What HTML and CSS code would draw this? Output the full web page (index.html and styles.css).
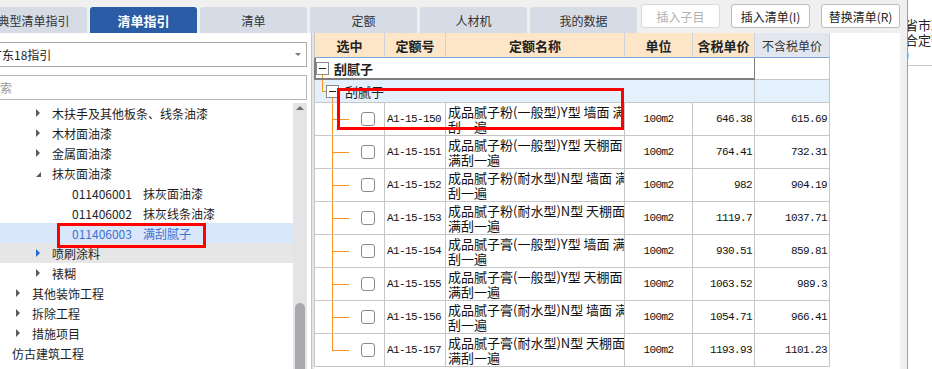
FILE: index.html
```html
<!DOCTYPE html>
<html lang="zh-CN">
<head>
  <meta charset="UTF-8">
  <title>清单指引</title>
  <link rel="stylesheet" href="styles.css">
</head>
<body>
  <div class="app">
    <div class="workspace">
      <div class="topbar">
        <div class="tabs">
          <div class="tab">典型清单指引</div>
          <div class="tab active">清单指引</div>
          <div class="tab">清单</div>
          <div class="tab">定额</div>
          <div class="tab">人材机</div>
          <div class="tab">我的数据</div>
        </div>
        <div class="actions">
          <button class="btn" disabled>插入子目</button>
          <button class="btn">插入清单(I)</button>
          <button class="btn">替换清单(R)</button>
        </div>
      </div>

      <div class="content">
        <div class="guide-panel">
          <div class="select">广东18指引<span class="caret"></span></div>
          <div class="search">搜索</div>
          <div class="tree-wrap">
            <ul class="tree">
              <li class="node l3"><span class="twisty"></span>木扶手及其他板条、线条油漆</li>
              <li class="node l3"><span class="twisty"></span>木材面油漆</li>
              <li class="node l3"><span class="twisty"></span>金属面油漆</li>
              <li class="node l3"><span class="twisty open"></span>抹灰面油漆</li>
              <li class="node l4"><span class="code">011406001</span>抹灰面油漆</li>
              <li class="node l4"><span class="code">011406002</span>抹灰线条油漆</li>
              <li class="node l4 selected"><span class="code">011406003</span>满刮腻子</li>
              <li class="node l3 hover"><span class="twisty"></span>喷刷涂料</li>
              <li class="node l3"><span class="twisty"></span>裱糊</li>
              <li class="node l2"><span class="twisty"></span>其他装饰工程</li>
              <li class="node l2"><span class="twisty"></span>拆除工程</li>
              <li class="node l2"><span class="twisty"></span>措施项目</li>
              <li class="node l1">仿古建筑工程</li>
            </ul>
            <div class="scroll">
              <span class="scroll-up"></span>
              <span class="thumb"></span>
            </div>
          </div>
          <div class="mark mark-tree"></div>
        </div>

        <div class="splitter"></div>

        <div class="quota-panel">
          <div class="quota">
            <div class="q-row head">
              <div class="cell">选中</div>
              <div class="cell">定额号</div>
              <div class="cell">定额名称</div>
              <div class="cell">单位</div>
              <div class="cell">含税单价</div>
              <div class="cell net">不含税单价</div>
            </div>
            <div class="q-row g1">
              <div class="cell span"><span class="fold"></span><b>刮腻子</b></div>
              <div class="cell"></div>
            </div>
            <div class="q-row g2">
              <div class="cell span"><span class="fold"></span>刮腻子</div>
              <div class="cell"></div>
            </div>
            <div class="q-row item">
              <div class="cell pick"><span class="check"></span></div>
              <div class="cell code">A1-15-150</div>
              <div class="cell name">成品腻子粉(一般型)Y型 墙面 满<br>刮一遍</div>
              <div class="cell unit">100m2</div>
              <div class="cell num">646.38</div>
              <div class="cell num">615.69</div>
            </div>
            <div class="q-row item">
              <div class="cell pick"><span class="check"></span></div>
              <div class="cell code">A1-15-151</div>
              <div class="cell name">成品腻子粉(一般型)Y型 天棚面<br>满刮一遍</div>
              <div class="cell unit">100m2</div>
              <div class="cell num">764.41</div>
              <div class="cell num">732.31</div>
            </div>
            <div class="q-row item">
              <div class="cell pick"><span class="check"></span></div>
              <div class="cell code">A1-15-152</div>
              <div class="cell name">成品腻子粉(耐水型)N型 墙面 满<br>刮一遍</div>
              <div class="cell unit">100m2</div>
              <div class="cell num">982</div>
              <div class="cell num">904.19</div>
            </div>
            <div class="q-row item">
              <div class="cell pick"><span class="check"></span></div>
              <div class="cell code">A1-15-153</div>
              <div class="cell name">成品腻子粉(耐水型)N型 天棚面<br>满刮一遍</div>
              <div class="cell unit">100m2</div>
              <div class="cell num">1119.7</div>
              <div class="cell num">1037.71</div>
            </div>
            <div class="q-row item">
              <div class="cell pick"><span class="check"></span></div>
              <div class="cell code">A1-15-154</div>
              <div class="cell name">成品腻子膏(一般型)Y型 墙面 满<br>刮一遍</div>
              <div class="cell unit">100m2</div>
              <div class="cell num">930.51</div>
              <div class="cell num">859.81</div>
            </div>
            <div class="q-row item">
              <div class="cell pick"><span class="check"></span></div>
              <div class="cell code">A1-15-155</div>
              <div class="cell name">成品腻子膏(一般型)Y型 天棚面<br>满刮一遍</div>
              <div class="cell unit">100m2</div>
              <div class="cell num">1063.52</div>
              <div class="cell num">989.3</div>
            </div>
            <div class="q-row item">
              <div class="cell pick"><span class="check"></span></div>
              <div class="cell code">A1-15-156</div>
              <div class="cell name">成品腻子膏(耐水型)N型 墙面 满<br>刮一遍</div>
              <div class="cell unit">100m2</div>
              <div class="cell num">1054.71</div>
              <div class="cell num">966.41</div>
            </div>
            <div class="q-row item last">
              <div class="cell pick"><span class="check"></span></div>
              <div class="cell code">A1-15-157</div>
              <div class="cell name">成品腻子膏(耐水型)N型 天棚面<br>满刮一遍</div>
              <div class="cell unit">100m2</div>
              <div class="cell num">1193.93</div>
              <div class="cell num">1101.23</div>
            </div>
          </div>
          <div class="mark mark-table"></div>
        </div>
      </div>
    </div>

    <div class="side">
      <div class="side-cell">省市政<br>合定额<br>)</div>
    </div>
  </div>
</body>
</html>
```

FILE: styles.css
```css
* {
  box-sizing: border-box;
}
body {
  margin: 0;
  font-family: "Noto Sans CJK SC", "Noto Sans", sans-serif;
  font-size: 12px;
  color: #1e1e1e;
  background: #f0f0f0;
  overflow: hidden;
}
.app {
  display: flex;
  height: 369px;
}
.workspace {
  width: 907px;
  display: flex;
  flex-direction: column;
}
.side {
  flex: 1;
  background: #fff;
  border-left: 1px solid #9e9e9e;
  overflow: hidden;
}
.side-cell {
  height: 66px;
  padding-top: 17px;
  margin-left: -3px;
  border-bottom: 1px solid #c8c8c8;
  font-size: 13px;
  line-height: 15px;
  white-space: nowrap;
  color: #222;
}

/* top bar */
.topbar {
  height: 33px;
  display: flex;
  flex: none;
}
.tabs {
  display: flex;
  gap: 3px;
  margin-left: -20px;
  padding-top: 7px;
}
.tab {
  width: 107px;
  height: 26px;
  background: #d6dce6;
  border-radius: 3px 3px 0 0;
  display: flex;
  align-items: center;
  justify-content: center;
  color: #333;
}
.tab.active {
  background: #2b5ca6;
  color: #fff;
  font-size: 13px;
  font-weight: bold;
}
.actions {
  display: flex;
  gap: 11px;
  margin-left: 4px;
  padding-top: 4px;
}
.btn {
  width: 79px;
  height: 24px;
  padding: 0;
  background: #fff;
  border: 1px solid #bcbcbc;
  border-radius: 3px;
  font-family: inherit;
  font-size: 12px;
  color: #222;
}
.btn:disabled {
  border-color: #d9d9d9;
  color: #b0b0b0;
}

/* main area */
.content {
  flex: 1;
  display: flex;
  min-height: 0;
}
.guide-panel {
  position: relative;
  width: 312px;
  background: #fff;
  border-right: 1px solid #c4c4c4;
  display: flex;
  flex-direction: column;
  overflow: hidden;
}
.splitter {
  width: 2px;
  background: #e4e4e4;
}
.quota-panel {
  position: relative;
  width: 586px;
  background: #fff;
}

.select, .search {
  flex: none;
  width: 323px;
  height: 25px;
  margin-left: -16px;
  display: flex;
  align-items: center;
  white-space: nowrap;
}
.select {
  margin-top: 9px;
  border: 1px solid #aaa;
  padding: 0 5px 0 5px;
  color: #1e1e1e;
}
.caret {
  margin-left: auto;
  border-left: 3px solid transparent;
  border-right: 3px solid transparent;
  border-top: 3px solid #777;
}
.search {
  margin-top: 8px;
  border: 1px solid #b5b5b5;
  padding-left: 3px;
  color: #9a9a9a;
}

.tree-wrap {
  flex: 1;
  display: flex;
  margin-top: 3px;
  min-height: 0;
}
.tree {
  width: 293px;
  margin: 0;
  padding: 0;
  list-style: none;
}
.node {
  height: 20px;
  display: flex;
  align-items: center;
  white-space: nowrap;
}
.l1 { padding-left: 12px; }
.l2 { padding-left: 16px; }
.l3 { padding-left: 36px; }
.l4 { padding-left: 72px; }
.twisty {
  width: 16px;
  flex: none;
  display: flex;
  align-items: center;
}
.twisty::before {
  content: "";
  border-left: 4px solid #5b5b5b;
  border-top: 4px solid transparent;
  border-bottom: 4px solid transparent;
}
.twisty.open::before {
  border-top: 0;
  border-left: 5px solid transparent;
  border-bottom: 5px solid #5b5b5b;
  margin-top: 3px;
}
.node .code {
  width: 71px;
  flex: none;
}
.node.selected {
  background: #dae6f9;
  color: #3a72d2;
}
.node.hover {
  background: #e6e6e6;
}
.node.hover .twisty::before {
  border-left-color: #1a6bd6;
}
.scroll {
  width: 14px;
  background: #e4e4e6;
  display: flex;
  flex-direction: column;
  align-items: center;
}
.scroll-up {
  margin-top: 3px;
  border-left: 4px solid transparent;
  border-right: 4px solid transparent;
  border-bottom: 4px solid #6e6e6e;
}
.thumb {
  width: 10px;
  height: 80px;
  margin-top: 193px;
  border-radius: 5px 5px 0 0;
  background: #a8aaae;
}

/* red annotation boxes */
.mark {
  position: absolute;
  border: 3px solid #f00;
}
.mark-tree {
  left: 57px;
  top: 190px;
  width: 149px;
  height: 25px;
}
.mark-table {
  left: 23px;
  top: 55px;
  width: 287px;
  height: 42px;
}

/* quota grid */
.quota {
  display: grid;
  grid-template-columns: 70px 61px 179px 68px 62px 75px;
  grid-template-rows: 25px 22px 23px repeat(8, 33px);
  width: max-content;
  border-left: 1px solid #c6c6c6;
}
.q-row {
  display: contents;
}
.cell {
  display: flex;
  align-items: center;
  border-right: 1px solid #c6c6c6;
  border-bottom: 1px solid #c6c6c6;
  overflow: hidden;
  white-space: nowrap;
}
.head .cell {
  justify-content: center;
  background: #fde6c7;
  border-right-color: #cdd2da;
  border-bottom-color: #79a5da;
  font-size: 13px;
  font-weight: bold;
  color: #222;
}
.head .cell.net {
  background: #e2e7ef;
  font-size: 12px;
  font-weight: normal;
  color: #333;
}
.span {
  grid-column: span 5;
}
.fold {
  flex: none;
  width: 13px;
  height: 13px;
  border: 1px solid #8a8a8a;
  background: linear-gradient(#222, #222) center / 7px 1px no-repeat, #fff;
}
.g1 .span {
  padding-left: 1px;
  border-right-color: #7f7f7f;
  border-bottom: 2px solid #7f7f7f;
  box-shadow: -1px 0 #7f7f7f, inset 1px 0 #7f7f7f;
  background: linear-gradient(#f7941e, #f7941e) 7px 16px / 1px 6px no-repeat;
}
.g1 b {
  margin-left: 5px;
  font-size: 13px;
}
.g2 .cell {
  background-color: #e4f1fc;
}
.g2 .span {
  padding-left: 11px;
  font-size: 13px;
  background:
    linear-gradient(#f7941e, #f7941e) 7px 0 / 1px 11px no-repeat,
    linear-gradient(#f7941e, #f7941e) 7px 11px / 5px 1px no-repeat,
    linear-gradient(#f7941e, #f7941e) 17px 17px / 1px 6px no-repeat,
    #e4f1fc;
}
.g2 .fold {
  margin-right: 6px;
}

.item .pick {
  padding-left: 46px;
  background:
    linear-gradient(#f7941e, #f7941e) 17px 0 / 1px 100% no-repeat,
    linear-gradient(#f7941e, #f7941e) 17px 16px / 17px 1px no-repeat;
}
.item.last .pick {
  background:
    linear-gradient(#f7941e, #f7941e) 17px 0 / 1px 17px no-repeat,
    linear-gradient(#f7941e, #f7941e) 17px 16px / 17px 1px no-repeat;
}
.check {
  width: 14px;
  height: 14px;
  border: 1px solid #8a8a8a;
  border-radius: 3px;
  background: #fff;
}
.item .code, .unit, .num {
  font-family: "Liberation Mono", monospace;
  font-size: 11px;
  letter-spacing: -0.6px;
  color: #111;
}
.item .code {
  padding-left: 2px;
}
.name {
  padding-left: 2px;
  font-size: 13px;
  line-height: 15px;
  color: #111;
}
.unit {
  justify-content: center;
}
.num {
  justify-content: flex-end;
  padding-right: 2px;
}
```
